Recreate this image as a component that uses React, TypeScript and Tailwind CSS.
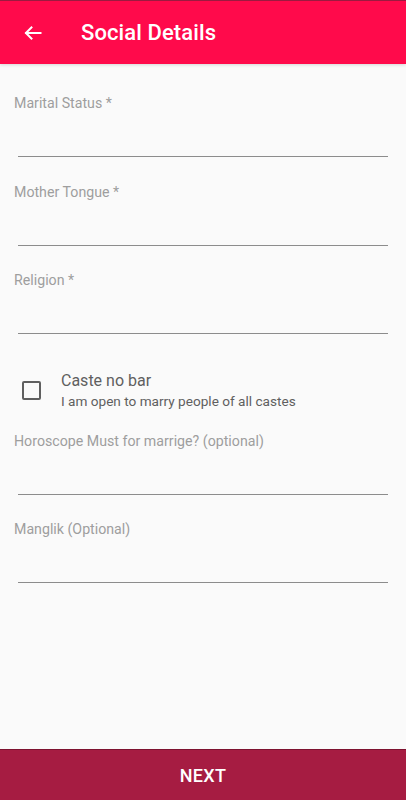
import React from 'react';

const font = { fontFamily: 'Roboto, "Noto Sans", Arial, sans-serif' };

interface FieldProps {
  label: string;
  className?: string;
}

const Field: React.FC<FieldProps> = ({ label, className = '' }) => (
  <div className={className}>
    <div className="pl-[14px] pt-[2px] text-[14.2px] leading-5 text-[#9e9e9e]">{label}</div>
    <div className="h-[43px]" />
    <div className="mx-[18px] h-px bg-[#8c8c8c]" />
  </div>
);

export default function App() {
  return (
    <div className="flex h-[800px] w-[406px] flex-col bg-[#fafafa]" style={font}>
      {/* Toolbar */}
      <header className="flex h-[64px] shrink-0 items-center border-t border-[#9c1a40] bg-[#ff0a4b] shadow-[0_1px_3px_rgba(0,0,0,0.15)]">
        <button className="ml-[21px] flex h-6 w-6 items-center justify-center text-white">
          <svg width="20" height="20" viewBox="0 0 24 24" fill="none" stroke="currentColor" strokeWidth="2.4" strokeLinecap="square">
            <path d="M21 12H4" />
            <path d="M11 4.5L3.5 12l7.5 7.5" strokeLinecap="butt" />
          </svg>
        </button>
        <h1 className="ml-[36px] text-[22px] font-medium tracking-[0.1px] text-white">Social Details</h1>
      </header>

      {/* Form */}
      <main className="flex-1">
        <Field label="Marital Status *" className="mt-[27px]" />
        <Field label="Mother Tongue *" className="mt-[23px]" />
        <Field label="Religion *" className="mt-[22px]" />

        <div className="mt-[36px] flex items-center">
          <div className="ml-[22px] h-[19px] w-[19px] rounded-[2px] border-2 border-[#5f5f5f]" />
          <div className="ml-[20px]">
            <div className="text-[16px] leading-[22px] text-[#5f5f5f]">Caste no bar</div>
            <div className="text-[13.6px] leading-[18px] text-[#5f5f5f]">I am open to marry people of all castes</div>
          </div>
        </div>

        <Field label="Horoscope Must for marrige? (optional)" className="mt-[19px]" />
        <Field label="Manglik (Optional)" className="mt-[22px]" />
      </main>

      {/* Next button */}
      <button className="flex h-[51px] shrink-0 items-center justify-center border-t border-[#7d1230] bg-[#a61c42] text-[18px] font-medium tracking-[0.3px] text-white">
        NEXT
      </button>
    </div>
  );
}
